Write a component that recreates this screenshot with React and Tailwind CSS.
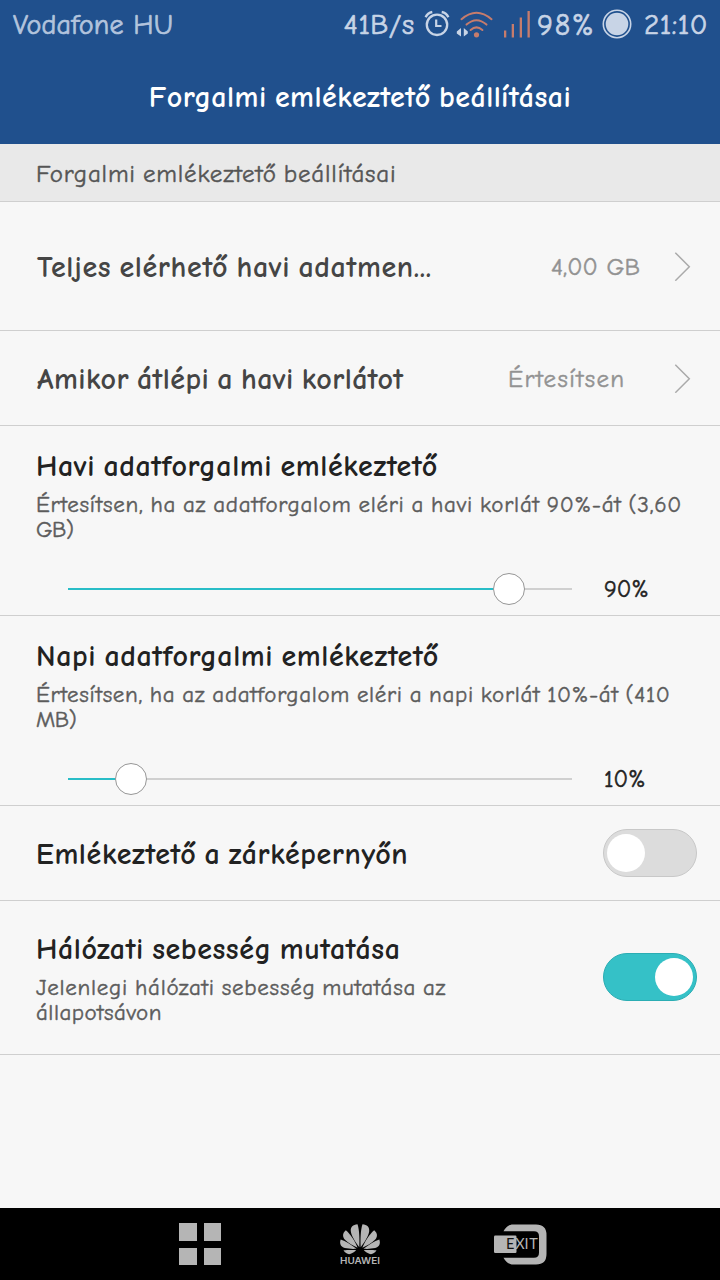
import React, { useState } from 'react';
import clsx from 'clsx';

const StatusBar = () => (
  <div className="h-12 flex items-center pl-[13px] pr-3 text-[29px] text-[#c8d4e6] [-webkit-text-stroke:0.7px_currentColor]">
    <span className="flex-1 pt-0.5 text-[28px] tracking-[0.2px] text-[#b3c4dd]">Vodafone HU</span>
    <span className="pt-0.5 tracking-[0.5px] mr-2">41B/s</span>
    <svg width="28" height="30" viewBox="0 0 28 30" fill="none" stroke="currentColor" className="mr-[5.5px]">
      <circle cx="14" cy="15.8" r="10.2" strokeWidth="2.3" />
      <path d="M13.2 10.5V17h5.3" strokeWidth="2.2" />
      <path d="M2.6 8.2Q4.5 4 9.3 3M25.4 8.2Q23.5 4 18.7 3" strokeWidth="2.3" />
    </svg>
    <svg width="38" height="30" viewBox="0 0 38 30" fill="none" className="mr-[8.5px]">
      <path d="M5 19v8.6L0.8 24.4v-2zM7.8 19v8.6l4-3.2v-2z" fill="#c8d4e6" />
      <g stroke="#c67c6c" strokeWidth="2" strokeLinecap="round">
        <path d="M5.5 10.2Q20.5 -2.8 35.5 10.2" />
        <path d="M10.5 15.6Q20.5 6.8 30.5 15.6" />
        <path d="M14.6 21Q20.5 15.8 26.4 21" />
      </g>
      <circle cx="20.5" cy="25.8" r="2.6" fill="#c67c6c" />
    </svg>
    <svg width="28" height="30" viewBox="0 0 28 30" fill="#c67c6c" className="mr-[6.5px]">
      <rect x="1" y="21.5" width="2.3" height="7" />
      <rect x="8.7" y="15" width="2.3" height="13.5" />
      <rect x="16.7" y="8.5" width="2.3" height="20" />
      <rect x="24.5" y="2" width="2.3" height="26.5" />
    </svg>
    <span className="pt-0.5 text-[30px] tracking-[1.8px] mr-[6.5px]">98%</span>
    <svg width="30" height="30" viewBox="0 0 30 30" className="mr-3">
      <circle cx="15" cy="15" r="13.7" fill="none" stroke="currentColor" strokeWidth="1.6" />
      <circle cx="15" cy="15" r="11.3" fill="currentColor" />
    </svg>
    <span className="pt-0.5 tracking-[0.6px]">21:10</span>
  </div>
);

const Chevron = () => (
  <svg width="18" height="30" viewBox="0 0 18 30" fill="none" stroke="#aaaaaa" strokeWidth="1.5">
    <path d="M1.3 1.7L15.3 15.7L1.3 29.7" />
  </svg>
);

const LinkRow = ({ title, value, className, titleClass, valueClass }) => (
  <div className={clsx('flex items-center border-b border-[#cfcfcf] pl-[37px] pr-[28px]', className)}>
    <span className={clsx('flex-1 pt-[3px] text-3xl font-semibold text-[#454545] whitespace-nowrap [word-spacing:-3px]', titleClass)}>{title}</span>
    <span className={clsx('pt-0.5 text-[25px] text-[#929292] whitespace-nowrap [-webkit-text-stroke:0.45px_currentColor]', valueClass)}>{value}</span>
    <Chevron />
  </div>
);

const SliderRow = ({ title, lines, value, onChange }) => {
  const handleClick = (e) => {
    const rect = e.currentTarget.getBoundingClientRect();
    onChange(Math.round(((e.clientX - rect.left) / rect.width) * 100));
  };

  return (
    <div className="border-b border-[#cfcfcf] pl-9 pt-[23px] pb-[10px]">
      <h2 className="text-3xl leading-9 font-semibold tracking-[0.6px] [word-spacing:-3px] text-[#222222]">{title}</h2>
      <p className="mt-[7px] text-[23px] leading-[25px] text-[#5c5c5c] whitespace-nowrap [word-spacing:-1.5px] [-webkit-text-stroke:0.45px_currentColor]">
        {lines.map((line) => (
          <span key={line.text} className={clsx('block', line.className)}>{line.text}</span>
        ))}
      </p>
      <div className="mt-[31px] ml-8 flex items-center h-8">
        <div className="relative w-[504px] h-8 flex items-center" onClick={handleClick}>
          <div className="h-0.5 w-full bg-[#d0d0d0]">
            <div className="h-full bg-[#29bdc7]" style={{ width: `${value}%` }} />
          </div>
          <div
            className="absolute top-0 size-8 -translate-x-1/2 rounded-full border border-[#969696] bg-white"
            style={{ left: `${Math.round(value * 4.72) + 16}px` }}
          />
        </div>
        <span className="ml-8 pb-px text-2xl text-[#222222] [-webkit-text-stroke:0.5px_currentColor]">{value}%</span>
      </div>
    </div>
  );
};

const Toggle = ({ on, onClick }) => (
  <button
    onClick={onClick}
    className={clsx(
      'w-[94px] h-12 shrink-0 rounded-full border flex items-center px-[3px]',
      on ? 'justify-end bg-[#35c1c7] border-[#2badb3]' : 'bg-[#dcdcdc] border-[#c8c8c8]'
    )}
  >
    <span className="size-[38px] rounded-full bg-white" />
  </button>
);

const NavBar = () => (
  <div className="h-[72px] bg-black flex items-center text-[#b5b5b5]">
    <div className="ml-[179px] grid grid-cols-2 gap-[7px]">
      <div className="size-[17.5px] bg-[#b5b5b5]" />
      <div className="size-[17.5px] bg-[#b5b5b5]" />
      <div className="size-[17.5px] bg-[#b5b5b5]" />
      <div className="size-[17.5px] bg-[#b5b5b5]" />
    </div>
    <svg width="42" height="42" viewBox="0 0 42 42" fill="currentColor" className="ml-[117.5px]">
      <g id="petals">
        <path d="M20.3 24.2C20.6 17 20.5 7 18.5 1.3C14 1.6 11.3 4.3 11.8 8.3C12.3 12.7 16.5 19.5 20.3 24.2Z" />
        <path d="M18.6 24.7C16 18 11.5 11 6.8 7.2C3.3 10.2 3.3 13.8 6 16.8C9 20 14 22.8 18.6 24.7Z" />
        <path d="M17.5 25.8C12.5 22 6.5 18.2 1.7 16.6C0.2 20.8 1.8 24.1 5.8 25.1C9.3 25.9 13.6 26 17.5 25.8Z" />
        <path d="M17.2 27C13 26.8 8 26.8 4.5 27.3C6.4 30.5 9.2 31.8 11.8 30.8C13.8 30 15.8 28.6 17.2 27Z" />
      </g>
      <use href="#petals" transform="translate(42 0) scale(-1 1)" />
      <text x="1" y="40.6" fontSize="9" fontWeight="600" textLength="40" lengthAdjust="spacingAndGlyphs" fontFamily="Inter, sans-serif">
        HUAWEI
      </text>
    </svg>
    <svg width="56" height="42" viewBox="0 0 56 42" fill="currentColor" className="ml-[112px]">
      <path d="M10.5 8.3C12.5 4.5 15.5 1.5 20 1.5H43Q53.5 1.5 53.5 12V31Q53.5 41.5 43 41.5H20C15.5 41.5 12.5 38.5 10.5 34.7H41Q46 34.7 46 29.7V13.3Q46 8.3 41 8.3Z" />
      <rect x="1" y="12.5" width="22.5" height="17.5" rx="1.2" />
      <g fontSize="14.5" fontFamily="Lato, sans-serif">
        <text x="13" y="26.4" fill="#111111">E</text>
        <text x="22.2" y="26.4">X</text>
        <text x="31.6" y="26.4">I</text>
        <text x="36.3" y="26.4">T</text>
      </g>
    </svg>
  </div>
);

const App = () => {
  const [monthly, setMonthly] = useState(90);
  const [daily, setDaily] = useState(10);
  const [lockScreen, setLockScreen] = useState(false);
  const [showSpeed, setShowSpeed] = useState(true);

  return (
    <div className="w-[720px] h-[1280px] flex flex-col overflow-hidden bg-[#f7f7f7] font-['Comic_Sans_MS','Comic_Neue',Lato,sans-serif]">
      <header className="h-36 shrink-0 bg-[#20508d]">
        <StatusBar />
        <h1 className="h-24 pt-[3px] flex items-center justify-center text-3xl font-semibold tracking-[0.48px] [word-spacing:-3px] text-white">
          Forgalmi emlékeztető beállításai
        </h1>
      </header>

      <main className="flex-1">
        <div className="h-[58px] pt-0.5 border-b border-[#cfcfcf] bg-[#e9e9e9] pl-9 flex items-center text-[25px] tracking-[0.81px] [word-spacing:-2px] text-[#555555] [-webkit-text-stroke:0.45px_currentColor]">
          Forgalmi emlékeztető beállításai
        </div>

        <LinkRow
          title="Teljes elérhető havi adatmen..."
          value="4,00 GB"
          className="h-[129px]"
          titleClass="tracking-[0.62px]"
          valueClass="mr-[34px] tracking-[0.1px]"
        />
        <LinkRow
          title="Amikor átlépi a havi korlátot"
          value="Értesítsen"
          className="h-[95px]"
          titleClass="tracking-[0.4px]"
          valueClass="mr-[48.5px] tracking-[1.35px]"
        />

        <SliderRow
          title="Havi adatforgalmi emlékeztető"
          lines={[
            { text: 'Értesítsen, ha az adatforgalom eléri a havi korlát 90%-át (3,60', className: 'tracking-[0.74px]' },
            { text: 'GB)', className: 'tracking-[-0.4px]' },
          ]}
          value={monthly}
          onChange={setMonthly}
        />
        <SliderRow
          title="Napi adatforgalmi emlékeztető"
          lines={[
            { text: 'Értesítsen, ha az adatforgalom eléri a napi korlát 10%-át (410', className: 'tracking-[0.69px]' },
            { text: 'MB)', className: 'tracking-[-0.4px]' },
          ]}
          value={daily}
          onChange={setDaily}
        />

        <div className="h-[95px] border-b border-[#cfcfcf] pl-9 pr-[23px] flex items-center justify-between">
          <h2 className="pt-[3px] text-3xl font-semibold tracking-[0.6px] [word-spacing:-3px] text-[#222222]">Emlékeztető a zárképernyőn</h2>
          <Toggle on={lockScreen} onClick={() => setLockScreen(!lockScreen)} />
        </div>

        <div className="h-[154px] pb-px border-b border-[#cfcfcf] pl-9 pr-[23px] flex items-center justify-between">
          <div className="pt-0.5">
            <h2 className="text-3xl leading-9 font-semibold tracking-[0.58px] [word-spacing:-3px] text-[#222222]">Hálózati sebesség mutatása</h2>
            <p className="mt-[7px] text-[23px] leading-[25px] text-[#5c5c5c] [word-spacing:-1.5px] [-webkit-text-stroke:0.45px_currentColor]">
              <span className="block tracking-[0.75px]">Jelenlegi hálózati sebesség mutatása az</span>
              <span className="block tracking-[0.5px]">állapotsávon</span>
            </p>
          </div>
          <Toggle on={showSpeed} onClick={() => setShowSpeed(!showSpeed)} />
        </div>
      </main>

      <NavBar />
    </div>
  );
};

export default App;
